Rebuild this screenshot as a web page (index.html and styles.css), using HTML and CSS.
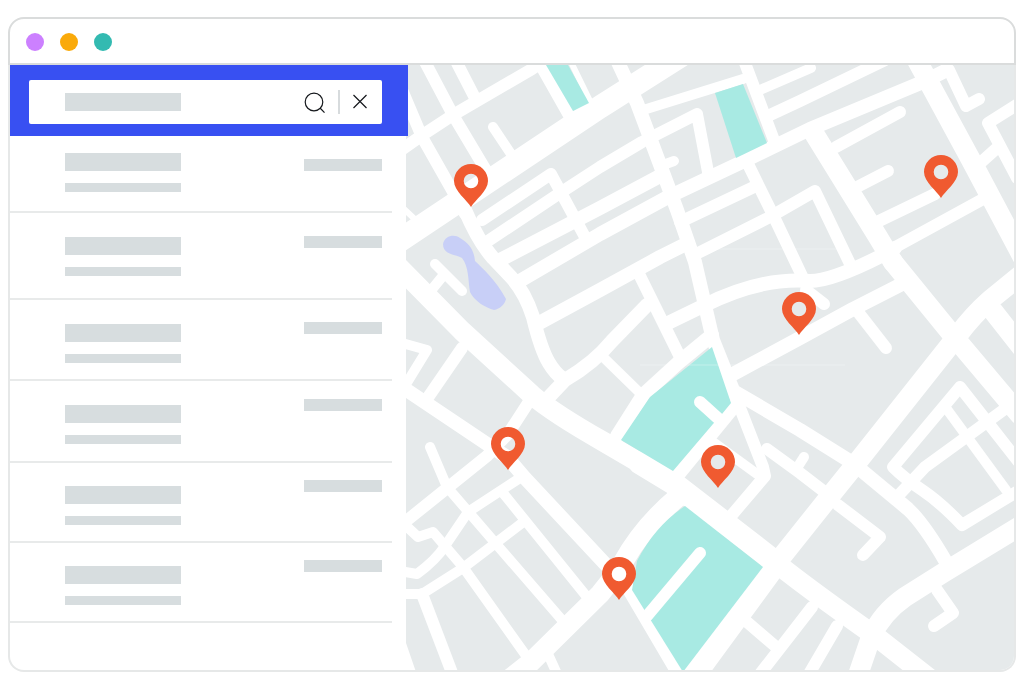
FILE: index.html
```html
<!DOCTYPE html>
<html lang="en">
<head>
<meta charset="utf-8">
<meta name="viewport" content="width=device-width, initial-scale=1">
<title>Store locator</title>
<link rel="stylesheet" href="styles.css">
</head>
<body>
<div class="window">
  <header class="titlebar">
    <span class="dot dot-purple"></span>
    <span class="dot dot-orange"></span>
    <span class="dot dot-teal"></span>
  </header>
  <main class="content">
    <aside class="sidebar">
      <form class="search">
        <div class="search-box">
          <input class="search-input" type="text" aria-label="Search">
          <button class="icon-button" type="button" aria-label="Find">
            <svg width="24" height="24" viewBox="0 0 24 24"><circle cx="12" cy="12" r="8.8"/><path d="M18 18l4.500 4.700"/></svg>
          </button>
          <span class="divider"></span>
          <button class="icon-button" type="button" aria-label="Clear">
            <svg width="20" height="24" viewBox="0 0 20 24"><path d="M3.500 5l13 13M16.500 5l-13 13"/></svg>
          </button>
        </div>
      </form>
      <ul class="results">
        <li class="result result-first"><div class="lines"><span class="bar bar-title"></span><span class="bar bar-sub"></span></div><span class="bar bar-meta"></span></li>
        <li class="result result-tall"><div class="lines"><span class="bar bar-title"></span><span class="bar bar-sub"></span></div><span class="bar bar-meta"></span></li>
        <li class="result result-medium"><div class="lines"><span class="bar bar-title"></span><span class="bar bar-sub"></span></div><span class="bar bar-meta"></span></li>
        <li class="result result-raised"><div class="lines"><span class="bar bar-title"></span><span class="bar bar-sub"></span></div><span class="bar bar-meta"></span></li>
        <li class="result result-compact"><div class="lines"><span class="bar bar-title"></span><span class="bar bar-sub"></span></div><span class="bar bar-meta"></span></li>
        <li class="result result-compact"><div class="lines"><span class="bar bar-title"></span><span class="bar bar-sub"></span></div><span class="bar bar-meta"></span></li>
      </ul>
    </aside>
    <section class="map" aria-label="Map">
      <svg class="map-canvas" viewBox="406 65 608 605" preserveAspectRatio="xMidYMid slice">
        <defs>
          <path id="pin" fill-rule="evenodd" d="M0 0C-4-7-17-16-17-26A17 17 0 0 1 17-26C17-16 4-7 0 0ZM-7.300-26A7.300 7.300 0 1 0 7.300-26A7.300 7.300 0 1 0-7.300-26Z"/>
        </defs>
        <rect class="land" x="406" y="65" width="608" height="605"/>
        <path class="lake" d="M443 244C445 235 455 234 460 238C469 243 474 250 475 261C482 268 496 280 506 299C505 304 500 309 494 310C486 308 474 301 470 292C468 280 469 267 462 258C455 254 443 255 443 244Z"/>
        <path class="gap" d="M406 643L416 672H404Z"/>
        <g class="road w6"><path d="M402 207L420 224M570 60L591 103"/></g>
        <g class="road w10">
          <path d="M493 127L517 163"/>
          <path d="M663 165L674 161"/>
          <path d="M640 111L743 79"/>
          <path d="M760 90L811 68"/>
          <path d="M429 293L442 277"/>
          <path d="M402 343L427 350L405 386"/>
          <path d="M430 447L447 487L497 545L562 620"/>
          <path d="M403 523L418 537L433 532L463 567L527 657"/>
          <path d="M400 571L417 574Q436 560 445 546L468 512L520 478"/>
          <path d="M400 594H422L463 568L522 523"/>
          <path d="M503 493L587 597"/>
          <path d="M548 654L558 676"/>
          <path d="M601 355L640 393"/>
          <path d="M713 442L757 474"/>
          <path d="M804 457L797 468"/>
          <path d="M946 408L1006 490"/>
          <path d="M435 264L462 291"/>
        </g>
        <g class="road w12">
          <path d="M424 60L453 115L487 172"/>
          <path d="M403 92L422 137L452 190L465 214"/>
          <path d="M457 63L475 98"/>
          <path d="M540 64L570 117"/>
          <path d="M482 220L551 174L585 237"/>
          <path d="M680 222L756 186"/>
          <path d="M742 55L775 143M746 160L775 219L803 278"/>
          <path d="M770 115L800 101L885 60"/>
          <path d="M925 79L949 70L966 106L979 99"/>
          <path d="M1018 104L988 123L1017 178M997 148L978 165"/>
          <path d="M836 147L900 112"/>
          <path d="M857 187L888 171"/>
          <path d="M879 221L935 194"/>
          <path d="M890 250L985 198"/>
          <path d="M858 312L886 348"/>
          <path d="M806 290L824 304"/>
          <path d="M462 348L429 396"/>
          <path d="M400 526L487 456L508 434L530 400"/>
          <path d="M422 594L454 678"/>
          <path d="M638 272L680 357"/>
          <path d="M767 449L800 473L826 493"/>
          <path d="M838 505L880 537L863 555"/>
          <path d="M1018 461L960 387L893 467Q904 478 922 490Q940 502 962 525L1018 491"/>
          <path d="M1009 406L925 467L897 497"/>
          <path d="M937 590L953 613L934 626"/>
          <path d="M837 626L809 674"/>
          <path d="M747 622L775 646"/>
          <path d="M812 607L760 674"/>
          <path d="M696 254L768 218L815 191L852 268"/>
          <path d="M735 395L763 467L765 476L731 516"/>
        </g>
        <g class="road w14">
          <path d="M400 151L421 136L453 115L532 69L550 57" class="w12"/>
          <path d="M465 210Q478 241 493 258L511 277Q525 292 533 317Q541 350 549 363Q555 373 562 378"/>
          <path d="M485 243L560 193L600 167L642 142L697 114L708 172" class="w12"/>
          <path d="M498 261L600 208L660 176"/>
          <path d="M518 282L600 234L668 197L740 163L810 129L923 82L947 70"/>
          <path d="M541 322L600 290L660 257L688 243"/>
          <path d="M617 60L637 103L677 210L695 262L713 340L735 395"/>
          <path d="M668 323L703 306Q760 277 810 281Q832 281 883 255L895 248"/>
          <path d="M735 373L800 338L853 309L902 284"/>
          <path d="M402 387L490 446L507 457L524 477L608 567M620 574L680 676"/>
          <path d="M548 398L565 380Q594 363 612 341L647 305"/>
          <path d="M617 436L643 395L678 363L712 335"/>
          <path d="M735 405L676 477"/>
          <path d="M735 392L800 430L856 465"/>
          <path d="M855 465L908 509Q924 524 946 562"/>
        </g>
        <g class="road w20">
          <path class="w23" d="M396 243L492 179L600 107L690 50"/>
          <path d="M815 135L878 237L893 262"/>
          <path d="M893 262L950 332L1020 415"/>
          <path d="M913 53L971 160L1022 256"/>
          <path d="M394 262L462 331L532 395Q553 413 604 442L640 463"/>
          <path class="w23" d="M640 463L673 483L770 558"/>
          <path d="M770 558Q800 583 878 638L934 682"/>
          <path d="M498 688L530 663L600 594Q612 580 622 564Q643 526 678 497"/>
          <path d="M1022 274L990 300Q973 315 958 335L855 465L830 496L775 565"/>
          <path class="w23" d="M775 565L690 681"/>
          <path d="M993 311L1022 348"/>
          <path d="M1020 526L943 573L905 597Q882 613 871 637L857 678"/>
        </g>
        <g class="park">
          <path d="M546 65H568L589 103L573 111Z"/>
          <path d="M715 93L743 84L767 143L736 158Z"/>
          <path d="M712 347L731 403L722 414L713 424L673 471L621 440L650 397Z"/>
          <path d="M685 506Q655 526 637 561L632 590L683 672L763 567Z"/>
        </g>
        <g class="road w12">
          <path d="M700 402L721 421"/>
          <path d="M700 553L647 616"/>
        </g>
        <path class="seam" d="M640 365H845M664 249H842"/>
        <g class="pins">
          <use href="#pin" x="471" y="207"/>
          <use href="#pin" x="941" y="198"/>
          <use href="#pin" x="799" y="335"/>
          <use href="#pin" x="508" y="470"/>
          <use href="#pin" x="718" y="488"/>
          <use href="#pin" x="619" y="600"/>
        </g>
      </svg>
    </section>
  </main>
</div>
</body>
</html>
```
FILE: styles.css
```css
* {
  box-sizing: border-box;
}

body {
  display: flex;
  min-height: 100vh;
  margin: 0;
  padding: 17px 8px 7px;
  background: #fff;
  font-family: "Liberation Sans", Arial, sans-serif;
}

.window {
  display: flex;
  flex: 1;
  flex-direction: column;
}

.titlebar {
  display: flex;
  align-items: center;
  gap: 16px;
  height: 48px;
  padding: 2px 16px 0;
  border: 2px solid #dadcdc;
  border-radius: 16px 16px 0 0;
}

.dot {
  width: 18px;
  height: 18px;
  border-radius: 50%;
}

.dot-purple { background: #cc80ff; }
.dot-orange { background: #faaa0a; }
.dot-teal { background: #33bab1; }

.content {
  display: flex;
  flex: 1;
  border: 2px solid #e6e8e8;
  border-top: 0;
  border-radius: 0 0 16px 16px;
}

.sidebar {
  flex: 0 0 396px;
}

/* The search panel overlaps the edge of the map slightly */
.search {
  position: relative;
  z-index: 1;
  margin: 0 -2px 0 0;
  padding: 15px 26px 12px 19px;
  background: #3850f2;
}

.search-box {
  display: flex;
  align-items: center;
  height: 44px;
  padding-right: 12px;
  border-radius: 2px;
  background: #fff;
}

.search-input {
  flex: 1;
  min-width: 0;
  height: 44px;
  padding: 0 36px;
  border: 0;
  outline: 0;
  background: linear-gradient(#d7dddf, #d7dddf) 36px center / 116px 18px no-repeat;
}

.icon-button {
  display: flex;
  padding: 0;
  border: 0;
  background: none;
}

.icon-button svg {
  fill: none;
  stroke: #15181c;
  stroke-width: 1.2;
}

.divider {
  width: 2px;
  height: 24px;
  margin: 0 10px 0 12px;
  background: #d7dbdd;
}

.results {
  margin: 0;
  padding: 0;
  list-style: none;
}

.result {
  display: flex;
  align-items: flex-start;
  justify-content: space-between;
  margin-right: 14px;
  padding: 24px 10px 0 55px;
  border-bottom: 2px solid #e8eaea;
}

.lines {
  display: grid;
  gap: 12px;
}

.bar {
  display: block;
  background: #d7dddf;
}

.bar-title {
  width: 116px;
  height: 18px;
}

.bar-sub {
  width: 116px;
  height: 9px;
}

.bar-meta {
  width: 78px;
  height: 12px;
}

.result-first {
  height: 77px;
  padding-top: 17px;
}

.result-first .bar-meta {
  margin-top: 6px;
}

.result-tall { height: 87px; }
.result-medium { height: 81px; }
.result-tall .bar-meta { margin-top: -1px; }
.result-medium .bar-meta { margin-top: -2px; }

.result-raised { height: 82px; }
.result-raised .bar-meta { margin-top: -6px; }

.result-compact {
  height: 80px;
  padding-top: 23px;
}

.result-compact .bar-meta { margin-top: -6px; }

.map {
  display: flex;
  flex: 1;
  min-width: 0;
  overflow: hidden;
  border-bottom-right-radius: 14px;
}

.map-canvas {
  width: 100%;
  height: 100%;
}

.land { fill: #e6eaeb; }
.park { fill: #a8eae3; }
.lake { fill: #c8cff7; }
.gap { fill: #fff; }

.road {
  fill: none;
  stroke: #fff;
  stroke-linecap: round;
  stroke-linejoin: round;
}

.w6 { stroke-width: 6px; }
.w10 { stroke-width: 10px; }
.w14 { stroke-width: 14px; }
.w12 { stroke-width: 12px; }
.w20 { stroke-width: 20px; }
.w23 { stroke-width: 23px; }

.seam {
  stroke: #fff;
  stroke-opacity: 0.3;
}

.pins { fill: #f05a30; }
```
